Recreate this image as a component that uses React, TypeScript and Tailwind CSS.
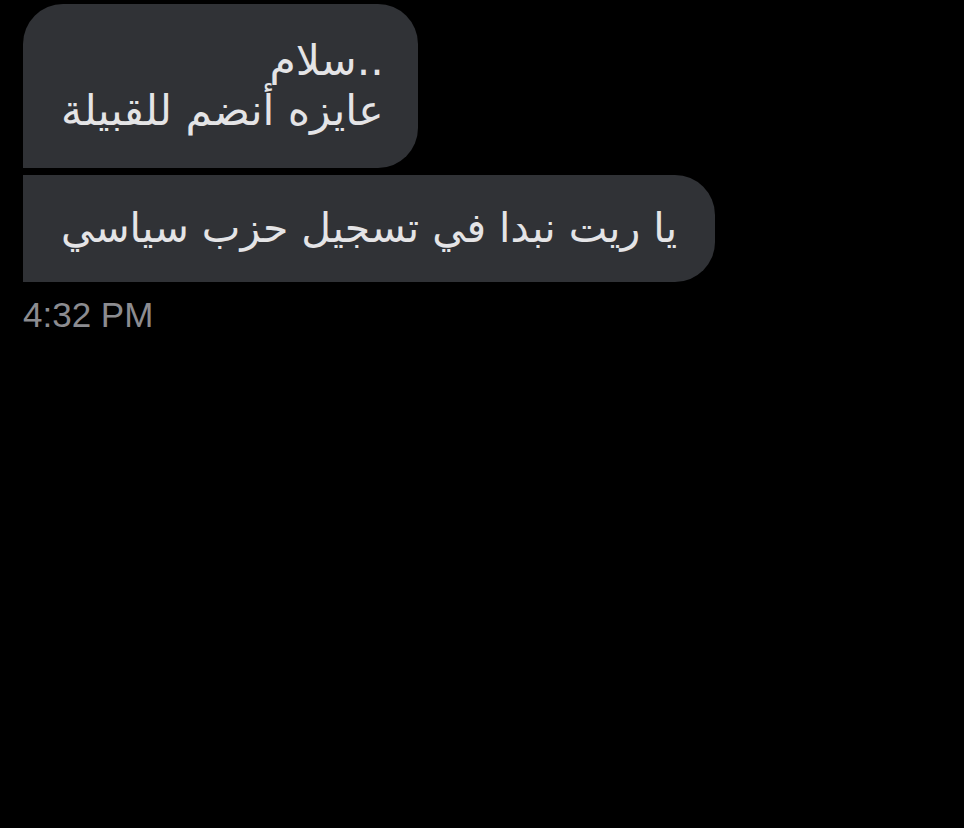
import React from 'react';

const bubbleText = 'leading-[50px] text-[#e4e4e6]';

const App: React.FC = () => {
  return (
    <div className="w-[964px] h-[828px] bg-black font-['DejaVu_Sans',sans-serif] overflow-hidden">
      <div className="flex flex-col items-start pl-[23px] pt-[4px] gap-[7px]">
        {/* first message */}
        <div
          dir="rtl"
          className={`bg-[#303236] rounded-[40px] rounded-bl-none pl-[38px] pr-[34px] pt-[32px] pb-[32px] text-[42.5px] ${bubbleText}`}
        >
          <div>..سلام</div>
          <div>عايزه أنضم للقبيلة</div>
        </div>

        {/* second message */}
        <div
          dir="rtl"
          className={`bg-[#303236] rounded-r-[40px] px-[38px] pt-[28px] pb-[29px] text-[41px] ${bubbleText}`}
        >
          يا ريت نبدا في تسجيل حزب سياسي
        </div>

        <div className="mt-[6px] text-[35px] leading-[40px] text-[#8c8c90] font-['Liberation_Sans',sans-serif]">
          4:32 PM
        </div>
      </div>
    </div>
  );
};

export default App;
